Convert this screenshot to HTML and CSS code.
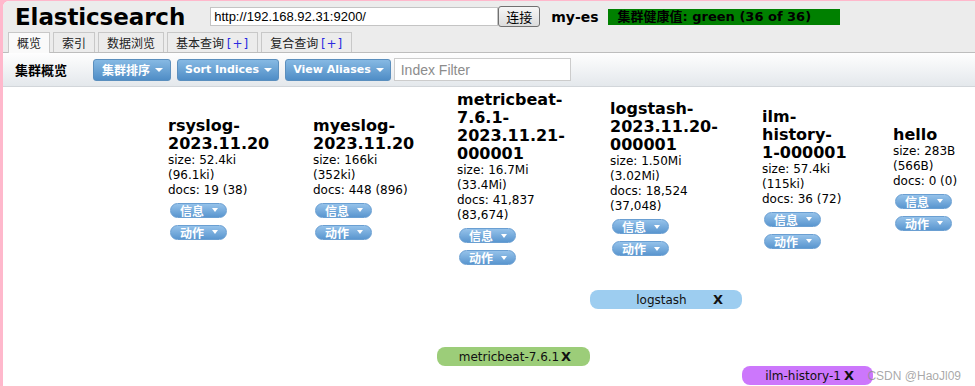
FILE: index.html
```html
<!DOCTYPE html>
<html lang="zh">
  <head>
    <meta charset="UTF-8" />
    <title>Elasticsearch head</title>
    <link rel="stylesheet" href="styles.css">
  </head>
  <body>
    <div class="page">
      <div class="header">
        <h1 class="logo">Elasticsearch</h1>
        <input class="url" type="text" value="http://192.168.92.31:9200/">
        <button class="connect">连接</button>
        <span class="cluster-name">my-es</span>
        <span class="health">集群健康值: green (36 of 36)</span>
      </div>

      <ul class="tabs">
        <li class="active">概览</li>
        <li>索引</li>
        <li>数据浏览</li>
        <li>基本查询 <span class="plus">[+]</span></li>
        <li>复合查询 <span class="plus">[+]</span></li>
      </ul>

      <div class="toolbar">
        <span class="toolbar-title">集群概览</span>
        <button class="menu-btn cn">集群排序<i class="caret"></i></button>
        <button class="menu-btn">Sort Indices<i class="caret"></i></button>
        <button class="menu-btn">View Aliases<i class="caret"></i></button>
        <input class="filter" type="text" placeholder="Index Filter">
      </div>

      <div class="overview">
        <!-- 第一列是节点列，这里为空 -->
        <div class="nodes"></div>

        <div class="index">
          <h3>rsyslog-<br>2023.11.20</h3>
          <p>size: 52.4ki (96.1ki)</p>
          <p>docs: 19 (38)</p>
          <span class="small-btn">信息<i class="caret"></i></span>
          <span class="small-btn">动作<i class="caret"></i></span>
        </div>
        <div class="index">
          <h3>myeslog-<br>2023.11.20</h3>
          <p>size: 166ki (352ki)</p>
          <p>docs: 448 (896)</p>
          <span class="small-btn">信息<i class="caret"></i></span>
          <span class="small-btn">动作<i class="caret"></i></span>
        </div>
        <div class="index">
          <h3>metricbeat-<br>7.6.1-<br>2023.11.21-<br>000001</h3>
          <p>size: 16.7Mi (33.4Mi)</p>
          <p>docs: 41,837 (83,674)</p>
          <span class="small-btn">信息<i class="caret"></i></span>
          <span class="small-btn">动作<i class="caret"></i></span>
        </div>
        <div class="index">
          <h3>logstash-<br>2023.11.20-<br>000001</h3>
          <p>size: 1.50Mi (3.02Mi)</p>
          <p>docs: 18,524 (37,048)</p>
          <span class="small-btn">信息<i class="caret"></i></span>
          <span class="small-btn">动作<i class="caret"></i></span>
        </div>
        <div class="index">
          <h3>ilm-<br>history-<br>1-000001</h3>
          <p>size: 57.4ki (115ki)</p>
          <p>docs: 36 (72)</p>
          <span class="small-btn">信息<i class="caret"></i></span>
          <span class="small-btn">动作<i class="caret"></i></span>
        </div>
        <div class="index last">
          <h3>hello</h3>
          <p>size: 283B (566B)</p>
          <p>docs: 0 (0)</p>
          <span class="small-btn">信息<i class="caret"></i></span>
          <span class="small-btn">动作<i class="caret"></i></span>
        </div>

        <!-- 别名 -->
        <div class="alias alias-logstash"><span class="alias-name">logstash</span><b class="remove">X</b></div>
        <div class="alias alias-metricbeat"><span class="alias-name">metricbeat-7.6.1</span><b class="remove">X</b></div>
        <div class="alias alias-ilm"><span class="alias-name">ilm-history-1</span><b class="remove">X</b></div>
      </div>

      <div class="watermark">CSDN @HaoJl09</div>
    </div>
  </body>
</html>
```

FILE: styles.css
```css
* {
  margin: 0;
  padding: 0;
  box-sizing: border-box;
}
body {
  background-color: #ffb8cc;
  font-family: "DejaVu Sans", "Noto Sans CJK SC", sans-serif;
  color: #000;
  overflow: hidden;
}
.page {
  position: relative;
  margin: 1px 0 0 3px;
  height: 385px;
  background-color: #fff;
  border-top-left-radius: 6px;
  overflow: hidden;
}

/* 顶部 */
.header {
  display: flex;
  align-items: center;
  height: 31px;
  padding-left: 12px;
  background-color: #ececec;
}
.logo {
  font-size: 23px;
  font-weight: bold;
  margin-right: 25px;
  letter-spacing: -0.1px;
}
.url {
  width: 288px;
  height: 19px;
  border: 1px solid #c4c4c4;
  padding-left: 3px;
  font-family: "Liberation Sans", sans-serif;
  font-size: 13px;
  color: #000;
}
.connect {
  width: 42px;
  height: 21px;
  border: 1px solid #707070;
  border-radius: 3px;
  background: linear-gradient(#f6f6f6, #dcdcdc);
  font-family: "Noto Sans CJK SC", sans-serif;
  font-size: 13px;
  line-height: 18px;
}
.cluster-name {
  margin-left: 11px;
  font-size: 14px;
  font-weight: bold;
}
.health {
  margin-left: 9px;
  width: 232px;
  height: 16px;
  padding-left: 10px;
  background-color: #008000;
  font-size: 13px;
  font-weight: bold;
  line-height: 16px;
  white-space: nowrap;
}

/* 标签页 */
.tabs {
  list-style: none;
  display: flex;
  gap: 3px;
  height: 21px;
  padding-left: 5px;
  background-color: #ececec;
  border-bottom: 1px solid #bdbdbd;
}
.tabs li {
  height: 20px;
  padding: 1px 8px 0;
  border: 1px solid #c8c8c8;
  border-bottom: none;
  font-family: "Noto Sans CJK SC", sans-serif;
  font-size: 12px;
  line-height: 18px;
  color: #222;
}
.tabs li.active {
  background-color: #fafafa;
  height: 21px;
}
.plus {
  color: #2b2be0;
  font-family: "DejaVu Sans", sans-serif;
  letter-spacing: 1px;
}

/* 工具栏 */
.toolbar {
  display: flex;
  align-items: center;
  height: 34px;
  padding-left: 12px;
  background: linear-gradient(#fefefe, #e4e8ec);
  border-bottom: 1px solid #d2d6da;
}
.toolbar-title {
  font-family: "Noto Sans CJK SC", sans-serif;
  font-size: 13px;
  font-weight: bold;
  margin-right: 26px;
}
.menu-btn {
  display: flex;
  align-items: center;
  height: 22px;
  padding: 0 6px 0 7px;
  margin-right: 6px;
  border: 1px solid #5b8fbe;
  border-radius: 3px;
  background: linear-gradient(#86b9e3, #4f8dc6);
  color: #fff;
  font-family: "DejaVu Sans", "Noto Sans CJK SC", sans-serif;
  font-size: 11px;
  font-weight: bold;
}
.menu-btn.cn {
  font-size: 12px;
  padding: 0 7px 0 8px;
}
.caret {
  display: inline-block;
  width: 0;
  height: 0;
  margin-left: 5px;
  border-top: 4px solid #fff;
  border-left: 4px solid transparent;
  border-right: 4px solid transparent;
}
.filter {
  width: 177px;
  height: 23px;
  margin-left: -3px;
  border: 1px solid #cccccc;
  padding-left: 6px;
  font-family: "Liberation Sans", sans-serif;
  font-size: 14px;
}
.filter::placeholder {
  color: #8c8c8c;
}

/* 概览 */
.overview {
  display: grid;
  grid-template-columns: 145px 145px 144px 153px 152px 131px 1fr;
  grid-template-rows: auto 25px;
  grid-auto-rows: 19px;
  padding-top: 4px;
}
.nodes {
  grid-row: 1;
}
.index {
  grid-row: 1;
  align-self: center;
  padding: 0 20px;
}
.index.last {
  padding-right: 0;
}
.index h3 {
  font-size: 16px;
  font-weight: bold;
  line-height: 18px;
  white-space: nowrap;
}
.index p {
  font-size: 12px;
  line-height: 15px;
}
.small-btn {
  display: flex;
  align-items: center;
  justify-content: space-between;
  width: 57px;
  height: 15px;
  margin: 5px 0 0 2px;
  padding: 0 8px 0 9px;
  border: 1px solid #6a9fd2;
  border-radius: 8px;
  background: linear-gradient(#95c2ea, #5a96cf);
  color: #fff;
  font-family: "Noto Sans CJK SC", sans-serif;
  font-size: 12px;
  font-weight: bold;
  line-height: 13px;
  overflow: hidden;
}
.small-btn + .small-btn {
  margin-top: 7px;
}
.small-btn .caret {
  border-top-width: 4px;
  border-left-width: 3.5px;
  border-right-width: 3.5px;
}

.alias {
  display: flex;
  align-items: center;
  padding: 0 19px 0 20px;
  border-radius: 8px;
  font-size: 12px;
  color: #111;
}
.alias-name {
  flex: 1;
  text-align: center;
  white-space: nowrap;
}
.remove {
  font-size: 13px;
}
.alias-logstash {
  grid-row: 3;
  grid-column: 5;
  background-color: #9dcdf0;
}
.alias-metricbeat {
  grid-row: 6;
  grid-column: 4;
  background-color: #9ccd79;
}
.alias-ilm {
  grid-row: 7;
  grid-column: 6;
  background-color: #cc77fc;
}

.watermark {
  position: absolute;
  right: 14px;
  bottom: 3px;
  font-family: "Liberation Sans", sans-serif;
  font-size: 12px;
  color: rgba(140, 140, 140, 0.75);
}
```
